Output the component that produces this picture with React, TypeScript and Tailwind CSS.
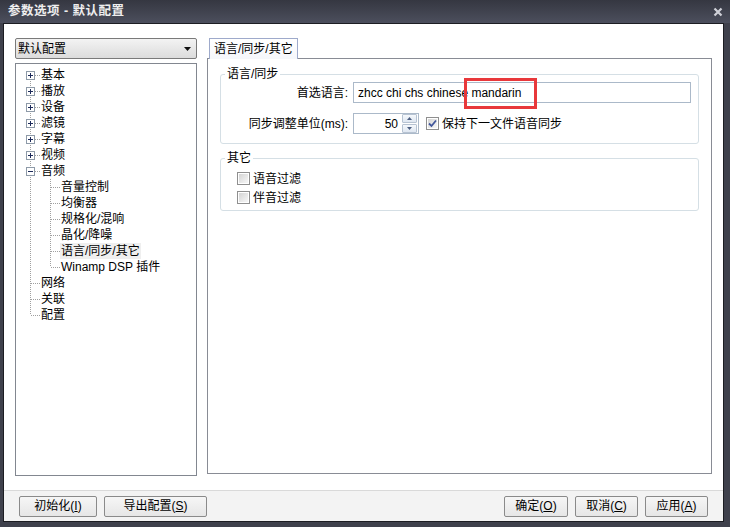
import React from 'react';

const sans = "font-['Liberation_Sans','Noto_Sans_CJK_SC',sans-serif]";

type Node = { label: string; kind: 'root' | 'child'; expander?: 'plus' | 'minus'; first?: boolean; last?: boolean; selected?: boolean };

const tree: Node[] = [
  { label: '基本', kind: 'root', expander: 'plus', first: true },
  { label: '播放', kind: 'root', expander: 'plus' },
  { label: '设备', kind: 'root', expander: 'plus' },
  { label: '滤镜', kind: 'root', expander: 'plus' },
  { label: '字幕', kind: 'root', expander: 'plus' },
  { label: '视频', kind: 'root', expander: 'plus' },
  { label: '音频', kind: 'root', expander: 'minus' },
  { label: '音量控制', kind: 'child' },
  { label: '均衡器', kind: 'child' },
  { label: '规格化/混响', kind: 'child' },
  { label: '晶化/降噪', kind: 'child' },
  { label: '语言/同步/其它', kind: 'child', selected: true },
  { label: 'Winamp DSP 插件', kind: 'child', last: true },
  { label: '网络', kind: 'root' },
  { label: '关联', kind: 'root' },
  { label: '配置', kind: 'root', last: true },
];

const dot = { stroke: '#a0a0a0', strokeWidth: 1, strokeDasharray: '1 1' };

function RootGlyph({ n }: { n: Node }) {
  return (
    <svg width="20" height="16" className="shrink-0">
      <line x1="10.5" y1={n.first ? 8 : 0} x2="10.5" y2={n.last ? 8 : 16} {...dot} />
      <line x1="11" y1="8.5" x2="20" y2="8.5" {...dot} />
      {n.expander && (
        <g>
          <rect x="6.5" y="4.5" width="8" height="8" fill="#fff" stroke="#8e9aa8" />
          <line x1="8" y1="8.5" x2="13" y2="8.5" stroke="#1c2a5a" />
          {n.expander === 'plus' && <line x1="10.5" y1="6" x2="10.5" y2="11" stroke="#1c2a5a" />}
        </g>
      )}
    </svg>
  );
}

function ChildGlyph({ last }: { last?: boolean }) {
  return (
    <>
      <svg width="20" height="16" className="shrink-0">
        <line x1="10.5" y1="0" x2="10.5" y2="16" {...dot} />
      </svg>
      <svg width="20" height="16" className="shrink-0">
        <line x1="10.5" y1="0" x2="10.5" y2={last ? 8 : 16} {...dot} />
        <line x1="11" y1="8.5" x2="20" y2="8.5" {...dot} />
      </svg>
    </>
  );
}

function CheckBox({ checked }: { checked?: boolean }) {
  return (
    <span className="w-[13px] h-[13px] shrink-0 border border-[#8f8f8f] bg-white p-[1px] flex">
      <span className="flex-1 bg-gradient-to-br from-[#d4d4d4] to-[#f7f7f7] flex items-center justify-center">
        {checked && (
          <svg width="9" height="9" viewBox="0 0 9 9">
            <path d="M1 4.5 L3.5 7 L8 1.5" fill="none" stroke="#41569a" strokeWidth="1.8" />
          </svg>
        )}
      </span>
    </span>
  );
}

function Btn({ w, label, hot }: { w: string; label: string; hot: string }) {
  return (
    <button className={`${w} h-[21px] border border-[#8a8a8a] rounded-[2px] bg-gradient-to-b from-[#f6f6f6] to-[#e6e6e6] text-[12px] leading-[19px] text-black ${sans}`}>
      {label}(<span className="underline">{hot}</span>)
    </button>
  );
}

export default function App() {
  return (
    <div className={`w-[730px] h-[527px] bg-[#3f414c] flex flex-col ${sans}`}>
      <div className="h-[23px] shrink-0 flex items-center justify-between pl-[8px] pr-[7px] bg-gradient-to-b from-[#353741] to-[#4c4f5d]">
        <span className="text-[12.5px] font-bold text-[#eeeeee] leading-none tracking-[0.5px]">参数选项 - 默认配置</span>
        <svg width="10" height="10" viewBox="0 0 10 10">
          <path d="M1.5 1.5 L8.5 8.5 M8.5 1.5 L1.5 8.5" stroke="#cfd1d8" strokeWidth="2.2" />
        </svg>
      </div>

      <div className="flex-1 ml-[3px] mr-[6px] mb-[5px] border border-[#1c1d22] bg-white flex flex-col">
        <div className="flex-1 flex px-[11px] pt-[14px] pb-[14px]">
          <div className="w-[182px] flex flex-col gap-[4px]">
            <div className="h-[21px] border border-[#7a7a7a] rounded-[2px] bg-gradient-to-b from-[#f3f3f3] to-[#dcdcdc] flex items-center justify-between pl-[2px] pr-[5px]">
              <span className="text-[12px] text-black">默认配置</span>
              <svg width="7" height="4" viewBox="0 0 7 4"><path d="M0 0 H7 L3.5 4 Z" fill="#111" /></svg>
            </div>
            <div className="flex-1 border border-[#828790] pt-[3px] pl-[4px]">
              {tree.map((n) => (
                <div key={n.label} className="h-[16px] flex items-center">
                  {n.kind === 'root' ? <RootGlyph n={n} /> : <ChildGlyph last={n.last} />}
                  <span className={`text-[12px] leading-[16px] text-black px-[1px] ${n.selected ? 'bg-[#efefef]' : ''}`}>{n.label}</span>
                </div>
              ))}
            </div>
          </div>

          <div className="ml-[10px] w-[505px] flex flex-col mb-[2px]">
            <div className="flex pl-[2px]">
              <div className="relative z-10 -mb-px h-[21px] px-[4px] border border-b-0 border-[#9eaacb] bg-gradient-to-b from-white to-[#f5f7fb] text-[12px] leading-[20px] text-black">
                语言/同步/其它
              </div>
            </div>
            <div className="flex-1 border border-[#898c95] px-[12px] pt-[8px]">
              <fieldset className="border border-[#d5dfe5] rounded-[3px] pb-[9px] pr-[7px]">
                <legend className="ml-[4px] px-[2px] text-[12px] leading-[14px] text-black">语言/同步</legend>
                <div className="mt-[1px] grid grid-cols-[127px_1fr] gap-x-[5px] gap-y-[10px] items-center text-[12px] text-black">
                  <span className="text-right">首选语言:</span>
                  <div className="h-[21px] border border-[#abb9c9] flex items-center pl-[4px]">
                    <span className="whitespace-pre">zhcc chi chs chinese </span>
                    <span className="relative">
                      mandarin
                      <span className="absolute -left-[7px] -right-[16px] -top-[6px] -bottom-[7px] border-[3px] border-[#e8383b]" />
                    </span>
                  </div>
                  <span className="text-right">同步调整单位(ms):</span>
                  <div className="flex items-center">
                    <div className="w-[66px] h-[21px] border border-[#abb9c9] flex items-center justify-end">
                      <span className="mr-[4px]">50</span>
                      <div className="w-[15px] h-[19px] flex flex-col gap-[1px] mr-[1px]">
                        <div className="flex-1 border border-[#b7c3d2] rounded-[1px] bg-gradient-to-b from-[#f5f8fc] to-[#dfe7f1] flex items-center justify-center">
                          <svg width="5" height="3" viewBox="0 0 5 3"><path d="M0 3 L2.5 0 L5 3 Z" fill="#4d5f82" /></svg>
                        </div>
                        <div className="flex-1 border border-[#b7c3d2] rounded-[1px] bg-gradient-to-b from-[#f5f8fc] to-[#dfe7f1] flex items-center justify-center">
                          <svg width="5" height="3" viewBox="0 0 5 3"><path d="M0 0 L5 0 L2.5 3 Z" fill="#4d5f82" /></svg>
                        </div>
                      </div>
                    </div>
                    <span className="ml-[7px] flex items-center gap-[3px]">
                      <CheckBox checked />
                      <span>保持下一文件语音同步</span>
                    </span>
                  </div>
                </div>
              </fieldset>

              <fieldset className="mt-[7px] border border-[#d5dfe5] rounded-[3px] pb-[3px] pl-[16px]">
                <legend className="-ml-[12px] px-[2px] text-[12px] leading-[14px] text-black">其它</legend>
                <div className="mt-[4px] flex flex-col text-[12px] text-black">
                  <label className="h-[19px] flex items-center gap-[3px]"><CheckBox /><span>语音过滤</span></label>
                  <label className="h-[19px] flex items-center gap-[3px]"><CheckBox /><span>伴音过滤</span></label>
                </div>
              </fieldset>
            </div>
          </div>
        </div>

        <div className="h-[31px] shrink-0 border-t border-[#d9d9d9] bg-[#f3f3f3] flex items-start justify-between px-[15px] pt-[5px]">
          <div className="flex gap-[7px]">
            <Btn w="w-[78px]" label="初始化" hot="I" />
            <Btn w="w-[103px]" label="导出配置" hot="S" />
          </div>
          <div className="flex gap-[7px]">
            <Btn w="w-[64px]" label="确定" hot="O" />
            <Btn w="w-[63px]" label="取消" hot="C" />
            <Btn w="w-[63px]" label="应用" hot="A" />
          </div>
        </div>
      </div>
    </div>
  );
}
